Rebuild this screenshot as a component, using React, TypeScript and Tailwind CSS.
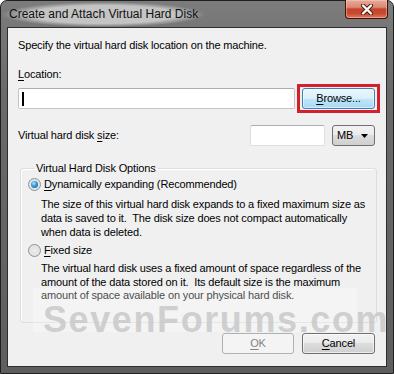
import React from "react";

function Radio({ checked }: { checked?: boolean }) {
  return (
    <div className="flex h-[13px] w-[13px] shrink-0 items-center justify-center rounded-full border border-[#8f9396] bg-[radial-gradient(circle_at_50%_50%,#f4f4f4_0%,#e6e6e6_55%,#cfd1d3_100%)]">
      {checked ? (
        <div className="h-[7px] w-[7px] rounded-full bg-[radial-gradient(circle_at_40%_35%,#b6ecff_0%,#3c9ee0_40%,#0f4f8f_100%)]" />
      ) : (
        <div className="h-[7px] w-[7px] rounded-full bg-[radial-gradient(circle_at_50%_50%,#f0f0f0_0%,#dadada_100%)]" />
      )}
    </div>
  );
}

function Button({
  children,
  width,
  disabled,
  hover,
}: {
  children: React.ReactNode;
  width: string;
  disabled?: boolean;
  hover?: boolean;
}) {
  let cls =
    "flex h-[21px] items-center justify-center rounded-[3px] border border-[#707070] bg-[linear-gradient(180deg,#f2f2f2_0%,#ebebeb_50%,#dddddd_50%,#cfcfcf_100%)] text-black shadow-[inset_0_0_0_1px_rgba(255,255,255,0.6)]";
  if (disabled)
    cls =
      "flex h-[21px] items-center justify-center rounded-[3px] border border-[#adb2b5] bg-[#f4f4f4] text-[#838383]";
  if (hover)
    cls =
      "flex h-[21px] items-center justify-center rounded-[3px] border border-[#3c7fb1] bg-[linear-gradient(180deg,#eaf6fd_0%,#d9f0fc_50%,#bee6fd_50%,#a7d9f5_100%)] text-black shadow-[inset_0_0_0_1px_rgba(255,255,255,0.55)]";
  return <div className={`${cls} ${width}`}>{children}</div>;
}

export default function App() {
  return (
    <div className="relative h-[374px] w-[394px] overflow-hidden bg-white font-['Liberation_Sans',Arial,sans-serif] text-[11px] tracking-[-0.15px] text-black">
      <div className="flex h-[374px] w-[394px] flex-col rounded-t-[7px] border border-[#1f1f1f] bg-[linear-gradient(180deg,#7c7c7c_0%,#6a6a6a_25%,#5e5e5e_100%)]">
        {/* Title bar */}
        <div className="flex h-[26px] shrink-0 items-start justify-between pl-[1px] pr-[5px]">
          <div className="flex h-[26px] items-center">
            <span className="rounded-full bg-[radial-gradient(closest-side,rgba(200,200,200,0.95)_72%,rgba(200,200,200,0)_100%)] px-[7px] py-[5px] text-[12px] leading-[15px] tracking-normal text-[#111]">
              Create and Attach Virtual Hard Disk
            </span>
          </div>
          <div className="-mt-[1px] flex h-[19px] w-[43px] items-center justify-center rounded-b-[4px] border border-t-0 border-[#3d1209] bg-[linear-gradient(180deg,#e9ab9a_0%,#d98a75_40%,#c4452b_50%,#c94a2f_75%,#e27c5f_100%)] shadow-[inset_0_0_0_1px_rgba(255,210,200,0.45)]">
            <svg width="14" height="11" viewBox="0 0 14 11">
              <path d="M3 1.5 L11 9.5 M11 1.5 L3 9.5" stroke="#4a1a10" strokeWidth="4.2" strokeLinecap="round" />
              <path d="M3 1.5 L11 9.5 M11 1.5 L3 9.5" stroke="#ffffff" strokeWidth="2.4" strokeLinecap="round" />
            </svg>
          </div>
        </div>

        {/* Client area */}
        <div className="mx-[6px] h-[340px] shrink-0 border border-[#2e2e2e] bg-[#f0f0f0]">
          <div className="flex w-[372px] flex-col pl-[10px]">
            <div className="pt-[10px] leading-[15px]">
              Specify the virtual hard disk location on the machine.
            </div>
            <div className="mt-[14px] leading-[15px]">
              <span className="underline underline-offset-[2px]">L</span>ocation:
            </div>
            <div className="mt-[2px] flex h-[29px] items-center">
              <div className="flex h-[21px] w-[277px] items-center rounded-[2px] border border-[#c2c6cc] border-t-[#abadb3] bg-white pl-[3px]">
                <div className="h-[14px] w-[2px] bg-black" />
              </div>
              <div className="ml-[2px] flex h-[29px] w-[83px] items-center justify-center border-[3px] border-[#d2202e]">
                <Button width="w-[73px]" hover>
                  <span>
                    <span className="underline underline-offset-[2px]">B</span>rowse...
                  </span>
                </Button>
              </div>
            </div>
            <div className="mt-[12px] flex h-[21px] items-center">
              <div className="w-[232px] leading-[15px]">
                Virtual hard disk <span className="underline underline-offset-[2px]">s</span>ize:
              </div>
              <div className="h-[21px] w-[75px] rounded-[2px] border border-[#dbdfe6] border-t-[#abadb3] bg-white" />
              <div className="ml-[7px] flex h-[21px] w-[43px] items-center justify-between rounded-[3px] border border-[#707070] bg-[linear-gradient(180deg,#f2f2f2_0%,#ebebeb_50%,#dddddd_50%,#cfcfcf_100%)] pl-[4px] pr-[6px]">
                <span>MB</span>
                <svg width="7" height="4" viewBox="0 0 7 4">
                  <path d="M0 0 L7 0 L3.5 4 Z" fill="#000" />
                </svg>
              </div>
            </div>

            <fieldset className="mt-[15px] ml-[2px] h-[162px] w-[357px] rounded-[3px] border border-[#d5dfe5] px-[7px] shadow-[inset_1px_1px_0_#ffffff]">
              <legend className="ml-[6px] px-[2px] leading-[15px]">Virtual Hard Disk Options</legend>
              <div className="mt-[1px] flex h-[15px] items-center">
                <Radio checked />
                <span className="ml-[3px] leading-[15px]">
                  <span className="underline underline-offset-[2px]">D</span>ynamically expanding (Recommended)
                </span>
              </div>
              <div className="mt-[5px] whitespace-pre pl-[13px] leading-[14px]">
                {"The size of this virtual hard disk expands to a fixed maximum size as\ndata is saved to it.  The disk size does not compact automatically\nwhen data is deleted."}
              </div>
              <div className="mt-[4px] flex h-[15px] items-center">
                <Radio />
                <span className="ml-[3px] leading-[15px]">
                  <span className="underline underline-offset-[2px]">F</span>ixed size
                </span>
              </div>
              <div className="mt-[4px] whitespace-pre pl-[13px] leading-[13.5px]">
                {"The virtual hard disk uses a fixed amount of space regardless of the\namount of the data stored on it.  Its default size is the maximum\namount of space available on your physical hard disk."}
              </div>
            </fieldset>

            <div className="mt-[10px] flex w-[357px] justify-end gap-[8px]">
              <Button width="w-[72px]" disabled>
                <span>
                  <span className="underline underline-offset-[2px]">O</span>K
                </span>
              </Button>
              <Button width="w-[73px]">
                <span>
                  <span className="underline underline-offset-[2px]">C</span>ancel
                </span>
              </Button>
            </div>
          </div>
        </div>
      </div>

      {/* Watermark */}
      <div className="pointer-events-none absolute left-[33px] top-[288px] flex h-[44px] w-[324px] items-start bg-[rgba(255,255,255,0.28)] pl-[10px] pt-[20px]">
        <span className="font-['Liberation_Sans',Arial,sans-serif] text-[36px] font-bold leading-[24px] tracking-[1.6px] text-[rgba(195,195,195,0.75)]">
          SevenForums.com
        </span>
      </div>
    </div>
  );
}
